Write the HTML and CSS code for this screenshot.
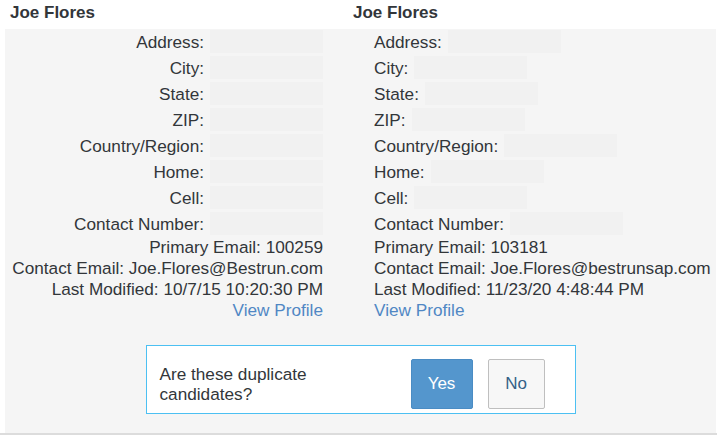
FILE: index.html
```html
<!DOCTYPE html>
<html>
<head>
<meta charset="utf-8">
<link rel="stylesheet" href="styles.css">
</head>
<body>
<div class="headers">
  <div class="name">Joe Flores</div>
  <div class="name">Joe Flores</div>
</div>
<div class="panel">
  <div class="cols">
    <div class="col col-left">
      <div class="row"><span class="lbl">Address:</span><span class="val"></span></div>
      <div class="row"><span class="lbl">City:</span><span class="val"></span></div>
      <div class="row"><span class="lbl">State:</span><span class="val"></span></div>
      <div class="row"><span class="lbl">ZIP:</span><span class="val"></span></div>
      <div class="row"><span class="lbl">Country/Region:</span><span class="val"></span></div>
      <div class="row"><span class="lbl">Home:</span><span class="val"></span></div>
      <div class="row"><span class="lbl">Cell:</span><span class="val"></span></div>
      <div class="row"><span class="lbl">Contact Number:</span><span class="val"></span></div>
      <div class="line">Primary Email: 100259</div>
      <div class="line">Contact Email: Joe.Flores@Bestrun.com</div>
      <div class="line">Last Modified: 10/7/15 10:20:30 PM</div>
      <div class="line"><a class="link" href="#">View Profile</a></div>
    </div>
    <div class="col col-right">
      <div class="row"><span class="lbl">Address:</span><span class="val"></span></div>
      <div class="row"><span class="lbl">City:</span><span class="val"></span></div>
      <div class="row"><span class="lbl">State:</span><span class="val"></span></div>
      <div class="row"><span class="lbl">ZIP:</span><span class="val"></span></div>
      <div class="row"><span class="lbl">Country/Region:</span><span class="val"></span></div>
      <div class="row"><span class="lbl">Home:</span><span class="val"></span></div>
      <div class="row"><span class="lbl">Cell:</span><span class="val"></span></div>
      <div class="row"><span class="lbl">Contact Number:</span><span class="val"></span></div>
      <div class="line">Primary Email: 103181</div>
      <div class="line">Contact Email: Joe.Flores@bestrunsap.com</div>
      <div class="line">Last Modified: 11/23/20 4:48:44 PM</div>
      <div class="line"><a class="link" href="#">View Profile</a></div>
    </div>
  </div>
  <div class="question">
    <div class="q-text"><p>Are these duplicate candidates?</p></div>
    <div class="q-buttons">
      <button class="btn btn-yes">Yes</button>
      <button class="btn btn-no">No</button>
    </div>
  </div>
</div>
<div class="bottom-line"></div>
</body>
</html>
```
FILE: styles.css
```css
html, body {
  margin: 0;
  padding: 0;
  background: #ffffff;
}
body {
  font-family: "Liberation Sans", Arial, sans-serif;
  font-size: 17.2px;
  color: #32363a;
  width: 717px;
  height: 435px;
  overflow: hidden;
}
.headers {
  display: grid;
  grid-template-columns: 343px 1fr;
  padding-left: 10px;
  height: 29px;
  align-items: center;
}
.name {
  font-weight: bold;
  font-size: 17px;
  line-height: 20px;
  margin-top: -3px;
}
.panel {
  margin: 0 1px 0 5px;
  background: #f5f5f5;
  height: 404px;
  box-sizing: border-box;
}
.cols {
  display: flex;
}
.col {
  display: flex;
  flex-direction: column;
}
.col-left {
  width: 318px;
  align-items: flex-end;
}
.col-right {
  margin-left: 51px;
  align-items: flex-start;
}
.row {
  display: flex;
  align-items: center;
  height: 26px;
  gap: 6px;
}
.lbl {
  line-height: 20px;
}
.val {
  display: block;
  width: 113px;
  height: 23px;
  margin-top: -1px;
  background: #f1f1f1;
}
.line {
  line-height: 21px;
  white-space: nowrap;
}
.link {
  color: #5087c4;
  text-decoration: none;
}
.question {
  display: flex;
  align-items: center;
  width: 430px;
  box-sizing: border-box;
  margin: 24px auto 0;
  background: #ffffff;
  border: 1px solid #4cc0f2;
  padding: 13px 30px 4px 13px;
}
.q-text {
  flex: 1;
}
.q-text p {
  margin: 0;
  max-width: 180px;
  line-height: 20px;
}
.q-buttons {
  display: flex;
  gap: 15px;
}
.btn {
  font-family: "Liberation Sans", Arial, sans-serif;
  font-size: 17px;
  height: 50px;
  border-radius: 2px;
  padding: 0;
  cursor: pointer;
}
.btn-yes {
  width: 62px;
  background: #5496cd;
  border: 1px solid #4a8cc4;
  color: #ffffff;
}
.btn-no {
  width: 57px;
  background: #f7f7f7;
  border: 1px solid #bfbfbf;
  color: #346187;
}
.bottom-line {
  height: 2px;
  background: #dcdcdc;
}
```
